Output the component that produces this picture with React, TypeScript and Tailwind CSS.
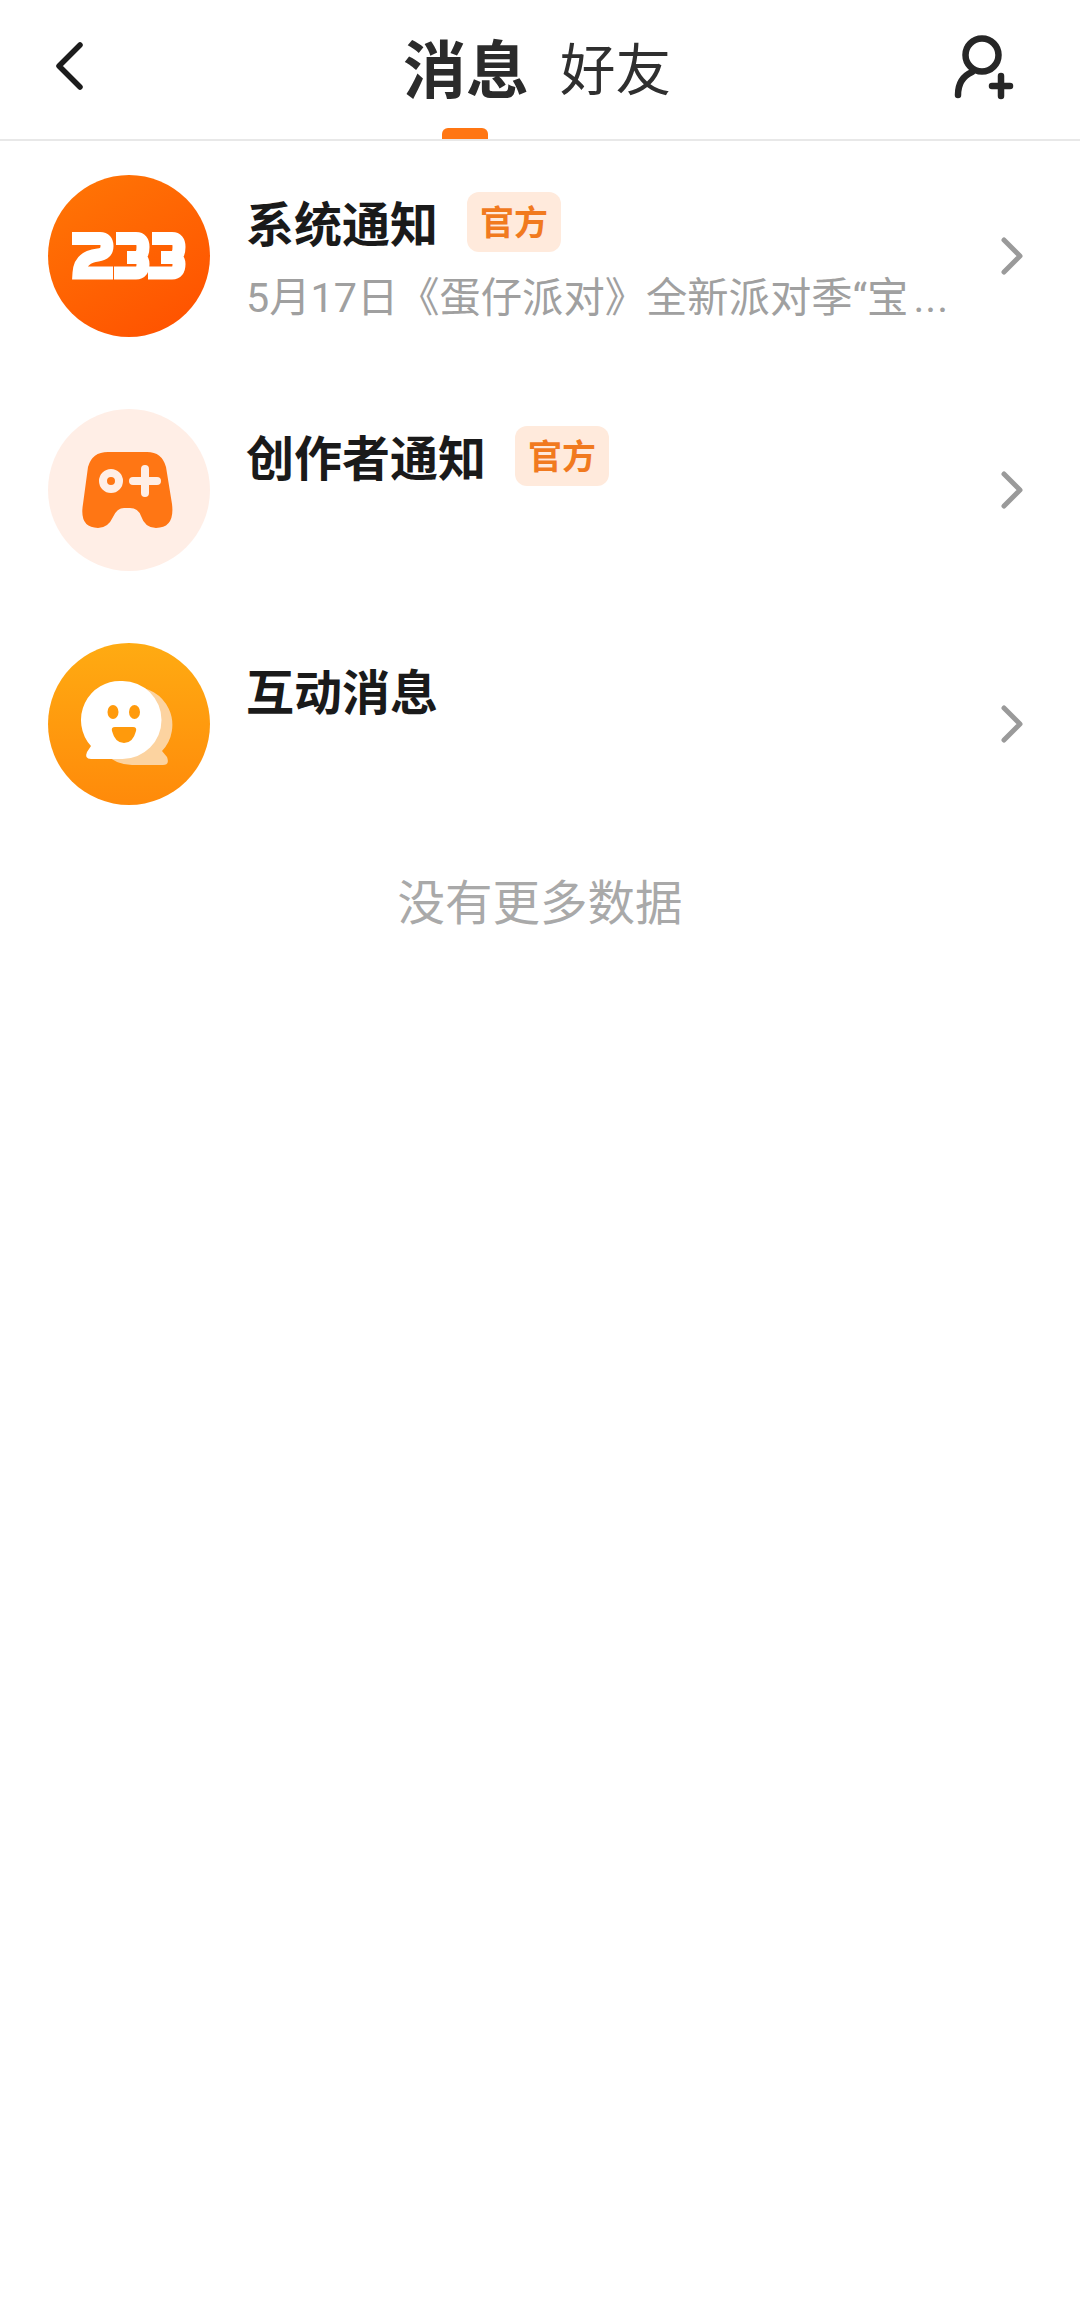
const CJK = "font-['Roboto','Noto_Sans_CJK_SC',sans-serif]";

function BackIcon() {
  return (
    <svg width="32" height="50" viewBox="0 0 32 50" fill="none">
      <path d="M27 4 L6 25 L27 46" stroke="#1c1c1c" strokeWidth="5.5" strokeLinecap="round" strokeLinejoin="round" />
    </svg>
  );
}

function AddFriendIcon() {
  return (
    <svg width="64" height="76" viewBox="0 0 64 76" fill="none" stroke="#262626" strokeWidth="6.5" strokeLinecap="round">
      <circle cx="30" cy="23" r="16.5" />
      <path d="M20 40 C11 44 6 52 6 63" />
      <path d="M40 54 H58 M49 44 V64" />
    </svg>
  );
}

function Chevron() {
  return (
    <svg width="24" height="38" viewBox="0 0 24 38" fill="none">
      <path d="M4 3 L20 19 L4 35" stroke="#9a9a9a" strokeWidth="5" strokeLinecap="round" strokeLinejoin="round" />
    </svg>
  );
}

function SystemAvatar() {
  return (
    <svg width="162" height="162" viewBox="0 0 162 162" fill="none">
      <defs>
        <linearGradient id="sys" x1="0.2" y1="0" x2="0.8" y2="1">
          <stop offset="0" stopColor="#ff7405" />
          <stop offset="1" stopColor="#ff5200" />
        </linearGradient>
      </defs>
      <circle cx="81" cy="81" r="81" fill="url(#sys)" />
      <g stroke="#fff" strokeWidth="13">
        <path d="M24 63.5 H52 Q59 63.5 59 71 Q59 79 50 80 Q32 82 31 98 H65" />
        <path d="M68 63.5 H88 Q95 63.5 95 72 Q95 82.5 88 82.5 H79 M88 82.5 Q95 82.5 95 89 Q95 98 88 98 H66" />
        <path d="M104 63.5 H124 Q131 63.5 131 72 Q131 82.5 124 82.5 H113 M124 82.5 Q131 82.5 131 89 Q131 98 124 98 H100" />
      </g>
    </svg>
  );
}

function CreatorAvatar() {
  return (
    <svg width="162" height="162" viewBox="0 0 162 162" fill="none">
      <circle cx="81" cy="81" r="81" fill="#ffeee6" />
      <path
        d="M60 43 H99 Q114 43 118 58 L124 95 Q127 119 108 119 Q97 119 93 107 Q90 99 82 99 H76 Q69 99 65 108 Q60 119 50 119 Q31 119 35 95 L40 58 Q44 43 60 43 Z"
        fill="#ff7614"
      />
      <circle cx="63" cy="72" r="8" stroke="#ffeee6" strokeWidth="8" />
      <path d="M85 72 H109 M97 60 V84" stroke="#ffeee6" strokeWidth="8" strokeLinecap="round" />
    </svg>
  );
}

function InteractAvatar() {
  return (
    <svg width="162" height="162" viewBox="0 0 162 162" fill="none">
      <defs>
        <linearGradient id="inter" x1="0" y1="0" x2="0" y2="1">
          <stop offset="0" stopColor="#ffab12" />
          <stop offset="1" stopColor="#ff8a0a" />
        </linearGradient>
      </defs>
      <circle cx="81" cy="81" r="81" fill="url(#inter)" />
      <path
        d="M84 44 A38 38 0 0 1 114 108 L119 114 Q122 122 115 122 H84 A39 39 0 0 1 84 44 Z"
        fill="#fcd3a0"
      />
      <path
        d="M74.5 38 A39 39 0 0 1 74.5 116 H43 Q36 116 39 109 L43 103 A39 39 0 0 1 74.5 38 Z"
        fill="#fff"
      />
      <ellipse cx="65" cy="69" rx="5.5" ry="7" fill="#ff9a0c" />
      <ellipse cx="86.5" cy="69" rx="5.5" ry="7" fill="#ff9a0c" />
      <path d="M67 84 H85 Q89 84 88 88 Q85 100 76 100 Q67 100 64 88 Q63 84 67 84 Z" fill="#ff9a0c" />
    </svg>
  );
}

function OfficialBadge() {
  return (
    <span className="ml-[29px] flex h-[60px] w-[94px] items-center justify-center rounded-[12px] bg-[#ffeadc] pt-[2px] text-[34px] font-bold text-[#f17a1f]">
      官方
    </span>
  );
}

const rows = [
  { title: "系统通知", official: true, subtitle: "5月17日《蛋仔派对》全新派对季“宝", avatar: <SystemAvatar /> },
  { title: "创作者通知", official: true, subtitle: "", avatar: <CreatorAvatar /> },
  { title: "互动消息", official: false, subtitle: "", avatar: <InteractAvatar /> },
];

export default function App() {
  return (
    <div className={`${CJK} min-h-[2317px] w-[1080px] bg-white`}>
      <header className="flex h-[141px] items-center justify-between border-b-2 border-[#e8e8e8] pl-[53px] pr-[64px]">
        <div className="mb-[8px] w-[69px]">
          <BackIcon />
        </div>
        <div className="flex items-center gap-[31px]">
          <div className="relative flex h-[139px] items-center">
            <span className="pt-[4px] text-[63px] font-bold leading-none text-[#2b2b2b]">消息</span>
            <span className="absolute bottom-0 left-[39px] h-[11px] w-[46px] rounded-t-[6px] bg-[#ff7613]" />
          </div>
          <span className="pt-[4px] text-[55.5px] leading-none text-[#2f2f2f]">好友</span>
        </div>
        <AddFriendIcon />
      </header>

      <div className="flex flex-col gap-[72px] pl-[48px] pr-[56px] pt-[34px]">
        {rows.map((row) => (
          <div key={row.title} className="flex h-[162px] items-center">
            {row.avatar}
            <div className="ml-[36px] h-full flex-1 pt-[17px]">
              <div className="flex items-start">
                <span className="pt-[4px] text-[48px] font-bold leading-[60px] text-[#1a1a1a]">{row.title}</span>
                {row.official && <OfficialBadge />}
              </div>
              {row.subtitle && (
                <p className="mt-[17px] w-[710px] overflow-hidden whitespace-nowrap text-[41.3px] leading-[50px] text-[#a0a0a0]">
                  {row.subtitle}
                  <span className="ml-[5px] tracking-[1px]">...</span>
                </p>
              )}
            </div>
            <Chevron />
          </div>
        ))}
      </div>

      <p className="mt-[69px] text-center text-[47.5px] leading-[60px] text-[#a9a9a9]">没有更多数据</p>
    </div>
  );
}
